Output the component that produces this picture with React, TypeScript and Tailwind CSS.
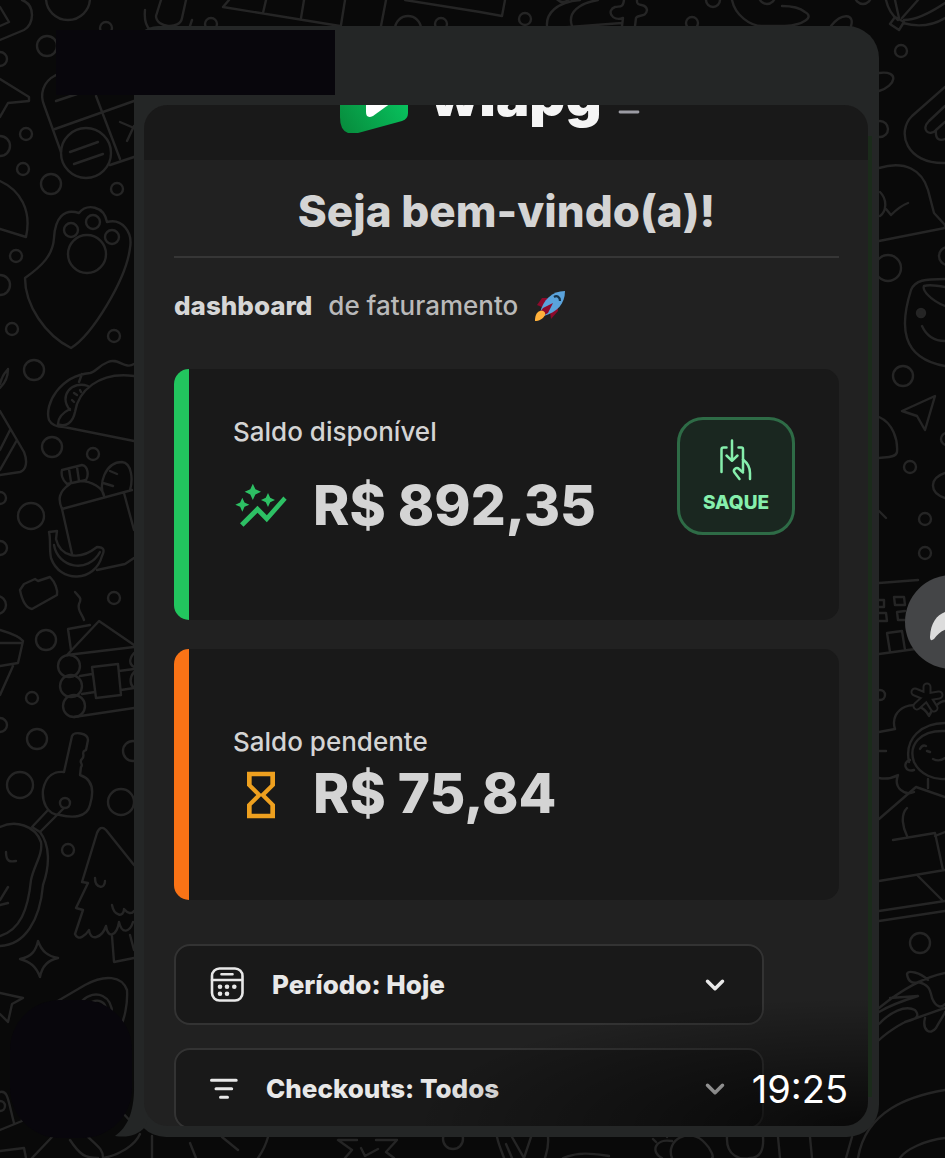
import type { ReactNode } from "react";
import { ChevronDown } from "lucide-react";
import { MdAutoGraph, MdHourglassEmpty } from "react-icons/md";

// [cx, cy, r]
const bubbles = [
  [68, -2, 22], [47, 46, 10], [0, 59, 7], [106, 28, 6], [211, 24, 6], [26, 134, 6], [0, 146, 10],
  [23, 169, 6], [51, 184, 10], [117, 189, 6], [16, 256, 6], [0, 285, 10], [12, 329, 6], [114, 336, 6],
  [34, 370, 10], [86, 153, 25], [87, 254, 19], [71, 230, 7], [93, 222, 7], [112, 237, 7],
  [408, 29, 13], [441, 24, 6], [525, 19, 6], [563, -6, 8], [713, 0, 7], [692, 23, 6], [767, -4, 8],
  [863, -4, 8], [901, 51, 6], [880, 129, 8], [888, 268, 13], [948, 256, 9], [903, 376, 10],
  [947, 439, 6], [910, 467, 6], [925, 519, 6], [925, 553, 6], [880, 695, 5], [920, 943, 10],
  [52, 447, 10], [93, 454, 6], [0, 498, 6], [31, 516, 13], [0, 548, 7], [114, 598, 6], [-3, 605, 9],
  [46, 640, 10], [32, 698, 6], [0, 725, 7], [37, 739, 10], [133, 751, 10], [69, 666, 11],
  [71, 686, 11], [74, 706, 11], [65, 803, 5], [20, 785, 13], [121, 802, 13], [68, 850, 6],
  [0, 1106, 5], [453, 1139, 10],
];

const doodles = [
  // top edge
  "M22 0C36 5 34 25 24 30L0 40M0 7L9 22L0 26M145 10C144 20 147 27 150 30",
  "M161 0L156 16C156 28 180 30 182 18L186 0M192 20L190 26M223 7L340 26M229 0L223 7M266 0L263 13M304 0L301 18M345 0L341 25M386 0L381 26M405 0L480 12L502 16L505 0",
  "M547 26C546 14 556 2 580 0M572 26C567 12 580 3 598 0M556 28L622 23M622 26L623 18C612 22 606 10 615 7C620 6 623 8 624 0M637 0C636 8 646 2 647 10C646 18 638 14 636 18L635 26",
  "M732 0C735 15 750 26 762 26L785 26C803 25 815 17 805 12C799 7 790 6 782 6M831 26C842 12 855 14 851 26",
  "M886 0C888 9 893 16 898 20M895 0L899 18M918 0L902 18M945 3C930 13 915 20 904 20M903 23C920 28 935 24 945 18M895 17L904 22L899 30L890 24Z",
  // left column
  "M56 75C42 82 40 95 44 105L61 152M55 129L134 101M96 96L120 159M110 165L134 157M70 152L98 142M74 164L103 154M56 101L77 94M120 122L134 128M127 141L134 126",
  "M0 79L29 97L29 101L8 103L0 117M0 181C20 190 32 210 26 237L0 229",
  "M25 278C42 266 53 255 54 238C55 218 64 208 79 213C87 203 104 206 107 222C122 218 133 232 130 248C126 280 92 335 71 348C45 335 25 305 25 278Z",
  "M0 384C3 372 8 370 8 369C8 378 4 384 0 388M0 411L24 452C28 462 26 470 20 472L0 475M10 430L0 450M17 440L0 470",
  "M134 364C125 370 118 357 108 362C98 366 96 372 90 373C60 376 44 404 49 420C52 426 58 427 64 427L134 441M134 376C98 371 78 392 75 412C73 422 66 428 58 424M88 386C72 380 58 396 70 410M82 374L79 382M58 424C58 416 64 412 70 409M74 393L77 395M80 390L81 392M72 400L74 402",
  "M62 470L82 465C88 466 89 475 86 480L67 484C62 480 61 474 62 470ZM69 469L71 482M77 467L79 481M70 484C58 492 58 500 62 509L72 554M80 481C92 481 103 488 104 496M62 509L132 490M104 496C98 485 105 462 122 462C132 463 133 480 130 490M124 493L134 530M97 570L125 564L134 558M110 471L117 474M103 483L113 486",
  "M49 532L57 531L56 539C60 556 78 562 97 547C104 547 105 550 102 556C95 582 60 584 51 558C49 548 51 540 49 532ZM54 545C58 568 88 574 100 552",
  "M20 590L24 584L35 579L38 581L50 577C55 582 58 590 57 595L32 609C26 608 22 600 20 590ZM75 592C80 598 82 598 79 604C77 610 82 614 84 620",
  "M67 655L99 621L134 645M67 655L134 647M71 650L68 629L90 625M92 667L118 664L121 695L96 698ZM80 676L92 674M82 694L95 692M74 717L134 708M119 671L134 669M121 690L134 688M134 653C128 660 130 665 134 667M134 672C129 678 130 685 134 688",
  "M0 630C10 633 20 637 23 641L18 663L0 666M0 643L22 643M13 666L0 695",
  "M64 772L72 736C74 731 88 733 88 740L86 750C80 752 86 756 82 759C78 762 84 764 81 767L80 775C95 780 93 795 90 805C87 818 72 818 60 815C46 815 42 800 43 790C46 775 55 771 64 772M48 810L32 827L40 832L64 808",
  "M0 827C15 820 35 825 41 842C43 855 34 865 31 880C28 910 20 930 0 936M40 832C50 845 50 865 43 885C40 920 25 945 0 946M6 852C6 862 10 862 16 861M0 900L8 887M0 905L8 903",
  "M134 865L106 830C102 826 99 828 97 833L82 882L88 883L76 908L83 910L75 934C78 942 86 935 89 930C90 942 102 938 106 926C108 940 117 935 119 922C122 935 130 932 133 922M95 878C95 888 105 890 105 881M112 905C114 916 124 918 124 909C128 914 132 914 134 911M112 936L114 962L134 958M130 935L134 950",
  "M38 941C42 952 48 956 58 958C48 960 42 966 40 977C36 966 30 962 20 959C32 957 36 950 38 941ZM0 993L23 998L12 1004L8 1022L0 1014",
  "M56 1002L85 985C105 974 122 976 127 990C128 1005 124 1020 120 1028M82 1001C95 988 114 995 112 1018M88 1004C98 997 107 1002 106 1012",
  "M0 1092C8 1090 8 1100 14 1123M22 1112L22 1121L0 1130M0 1151L24 1148L26 1158M120 1110L134 1125",
  // bottom edge
  "M32 1158L52 1137M70 1140C80 1155 85 1158 98 1158M88 1137C100 1148 103 1150 103 1158M103 1158C120 1155 135 1145 140 1134M152 1136L152 1158M190 1143L196 1158M222 1137L238 1150M268 1137C265 1148 260 1155 258 1158",
  "M345 1158L352 1150L338 1140L357 1140M376 1140L397 1140L386 1152L394 1158M361 1148L365 1156L378 1149M497 1137C499 1146 502 1152 504 1158M512 1137L524 1158M506 1144L512 1158M531 1137L524 1158M548 1137C549 1148 546 1154 545 1158M563 1158C580 1151 595 1154 609 1156",
  "M672 1158C665 1140 690 1126 705 1143C712 1150 714 1158 712 1158M672 1141C655 1138 650 1152 662 1158M656 1142L653 1139M667 1137L666 1133M727 1137C726 1156 740 1160 750 1158C760 1158 764 1150 763 1137M778 1137L780 1158M810 1137L812 1158M852 1137L846 1158M945 1138C925 1140 905 1150 900 1158M858 1158C866 1110 910 1096 945 1090",
  // right column
  "M879 73C900 70 896 86 879 91M945 87L912 116C896 132 906 164 945 163M945 106L929 121C920 130 930 137 936 130L945 122M936 130C935 140 940 141 945 139",
  "M879 168C905 160 922 170 928 190L934 213L945 225L945 228L879 241M880 192C888 200 886 212 880 216M886 209L891 215C896 210 900 206 908 203",
  "M945 279C925 279 915 280 911 290C900 325 900 358 945 366M945 306C930 300 922 290 924 286C930 284 940 286 945 287M922 326C927 337 936 341 945 341",
  "M902 411L935 396L925 430L917 416ZM879 417C893 423 898 440 897 452C896 458 885 457 879 458M945 473C930 478 928 492 945 498M879 511L886 518",
  "M879 583L918 580M879 654L930 647M879 600L884 600L884 607L879 607M894 597L904 597L905 605L895 605ZM879 613L886 613L887 621L879 621M905 611L897 612L898 620L906 620M887 633L902 631L905 650M887 633L890 652",
  "M879 732L895 729C888 708 918 695 929 716C932 708 940 701 945 701M879 778C890 780 896 776 898 775C893 788 905 796 914 792M945 723C922 723 904 738 909 762M945 731C920 730 908 745 914 762C920 775 935 780 945 779M910 760C902 762 905 773 914 770M920 749C922 745 924 745 926 746M927 751L930 752M933 759C937 761 941 761 945 758M879 751L886 751",
  "M879 819L916 787L945 797M928 779L928 788M907 808C900 815 903 828 907 836M893 840L935 833L943 870M935 836L945 832M879 881L945 870M918 876L942 900M879 911L945 901M879 921L945 911",
  "M945 973C920 978 895 995 879 1008M879 1012C892 1004 905 1000 918 996L890 998M879 1024C890 1012 905 1005 915 1010C922 1018 912 1020 905 1022C890 1030 876 1040 866 1055M928 980C920 972 908 970 907 974C908 982 913 984 918 982C930 985 930 990 932 998C936 1008 942 1008 945 1004M925 1018C922 1030 930 1036 936 1028C940 1020 945 1014 945 1012M905 1022L945 1008M866 1048C872 1058 876 1052 878 1040",
];

function Wallpaper() {
  return (
    <svg
      className="absolute inset-0 size-full"
      viewBox="0 0 945 1158"
      preserveAspectRatio="xMidYMin slice"
      fill="none"
      stroke="#252525"
      strokeWidth="2.4"
      strokeLinecap="round"
      strokeLinejoin="round"
      aria-hidden="true"
    >
      {bubbles.map(([cx, cy, r], i) => (
        <circle key={i} cx={cx} cy={cy} r={r} />
      ))}
      {doodles.map((d, i) => (
        <path key={i} d={d} />
      ))}
      <circle cx="921" cy="313" r="4" fill="#252525" />
      {/* asterisk outline */}
      <path d="M927 697V687M927 697L939 695M927 697L934 708M927 697L917 706M927 697L915 692" strokeWidth="9" />
      <path d="M927 697V687M927 697L939 695M927 697L934 708M927 697L917 706M927 697L915 692" stroke="#090909" strokeWidth="5" />
    </svg>
  );
}

function CalendarIcon() {
  return (
    <svg className="h-[35px] w-[34px] shrink-0" viewBox="0 0 34 35" fill="none" stroke="currentColor" strokeWidth="2.6" strokeLinecap="round">
      <rect x="2" y="1.5" width="30.5" height="32" rx="7.5" />
      <path d="M2 13H32M11.5 7.3H22.5" />
      <g fill="currentColor" stroke="none">
        <circle cx="10" cy="19.7" r="2.3" />
        <circle cx="17" cy="19.7" r="2.3" />
        <circle cx="24.3" cy="19.7" r="2.3" />
        <circle cx="10" cy="26.7" r="2.3" />
        <circle cx="17" cy="26.7" r="2.3" />
      </g>
    </svg>
  );
}

function FilterIcon() {
  return (
    <svg className="h-[22px] w-[28px] shrink-0" viewBox="0 0 28 22" fill="none" stroke="currentColor" strokeWidth="3" strokeLinecap="round">
      <path d="M1.5 2.2H26.2M6 10.8H21.7M10.5 19.2H17.5" />
    </svg>
  );
}

function WithdrawIcon() {
  return (
    <svg className="h-[42px] w-[34px]" viewBox="0 0 34 42" fill="none" stroke="currentColor" strokeWidth="2.5" strokeLinecap="round" strokeLinejoin="round">
      <path d="M2.5 33V10.5C2.5 9 3.2 8.500 4.500 8.500H7.500" />
      <path d="M19.500 8.500H22.500C23.500 8.500 24 9 24 10.500V32" />
      <path d="M13 1.500V21.500M7.500 16.500L13 21.800L18.500 16.500" />
      <path d="M24 20.500C28.500 24 31 29 31 34V40" />
      <path d="M20.500 40L15.500 33.500C13.500 30.500 17.500 27.500 20 30L24 33.500" />
    </svg>
  );
}

function BalanceCard({ className, label, amount, icon, gap, children }: {
  className: string;
  label: string;
  amount: string;
  icon: ReactNode;
  gap: string;
  children?: ReactNode;
}) {
  return (
    <section className={`flex min-h-[251px] items-start justify-between rounded-[15px] border-l-[15px] bg-[#191919] px-11 ${className}`}>
      <div>
        <h2 className="text-[26px] leading-[30px] font-medium">{label}</h2>
        <div className={`flex items-center gap-6 ${gap}`}>
          {icon}
          <p className="pb-1 text-[55px] leading-[56px] font-extrabold whitespace-nowrap">{amount}</p>
        </div>
      </div>
      {children}
    </section>
  );
}

function FilterSelect({ icon, label, option }: { icon: ReactNode; label: string; option: string }) {
  return (
    <div className="flex h-[81px] w-[590px] max-w-full items-center gap-7 rounded-2xl border-2 border-[#333] bg-[#191919] pr-8 pl-[34px] text-[#e8e8e8]">
      {icon}
      <select aria-label={label} className="min-w-0 flex-1 appearance-none bg-transparent text-[26px] leading-8 font-extrabold">
        <option>{option}</option>
      </select>
      <ChevronDown className="pointer-events-none size-[30px] shrink-0" strokeWidth={2.8} />
    </div>
  );
}

export default function App() {
  return (
    <main className="relative min-h-screen overflow-hidden bg-[#090909] pt-[26px] pr-[66px] pb-[21px] pl-[134px] font-['Inter',sans-serif] text-[#d4d4d4]">
      <Wallpaper />

      {/* message bubble */}
      <article className="relative rounded-[32px] rounded-tl-[24px] bg-[#242626] pt-[79px] pr-[11px] pb-[11px] pl-[10px]">
        <div className="absolute top-1 -left-[78px] h-[65px] w-[279px] bg-[#08060c]" />
        <div className="absolute -bottom-px -left-[124px] h-[138px] w-[122px] rounded-[50px] bg-[#08060c]" />
        <svg className="absolute -left-5 bottom-0 h-14 w-9" viewBox="0 0 36 56" fill="#242626" aria-hidden="true">
          <path d="M20 0C21 30 14 46 1 55C14 57 24 54 31 46L36 30V0Z" />
        </svg>
        <div className="absolute top-[110px] right-[7px] bottom-10 w-1 bg-[#1b2b1b]" />

        <div className="relative overflow-hidden rounded-[24px] bg-[#212121]">
          <header className="flex h-[55px] items-end justify-center overflow-hidden bg-[#191919] pr-8 pb-[27px]">
            <svg className="h-[74px] w-[68px] shrink-0" viewBox="0 0 68 74" aria-hidden="true">
              <defs>
                <linearGradient id="logo" x1="0" y1="1" x2="1" y2="0.3">
                  <stop offset="0" stopColor="#07893b" />
                  <stop offset="1" stopColor="#08cb63" />
                </linearGradient>
              </defs>
              <path d="M0 14Q0 0 14 3L60 14Q68 16 68 24V54Q68 60 62 62L18 74Q0 78 0 58Z" fill="url(#logo)" />
              <path d="M26 24Q26 17 32 21L51 34Q57 39 51 44L33 57Q26 60 26 53Z" fill="#fff" />
            </svg>
            <p className="ml-[22px] text-[56px] leading-[74px] font-black text-[#f5f5f5]">wiapg</p>
            <button type="button" aria-label="Menu" className="ml-4 h-[74px]">
              <svg className="h-[74px] w-[22px]" viewBox="0 0 22 74" stroke="#9b9ba3" strokeWidth="2.8" strokeLinecap="round">
                <path d="M2 33H20M2 43H20M2 53H20" />
              </svg>
            </button>
          </header>

          <div className="pr-[29px] pl-[30px]">
            <h1 className="border-b-2 border-[#363636] pt-6 pb-[18px] text-center text-[44px] leading-[54px] font-extrabold">
              Seja bem-vindo(a)!
            </h1>
            <p className="flex items-center pt-8 pb-[47px] text-[26px] leading-8 font-medium text-[#b9b9b9]">
              <strong className="mr-4 font-extrabold text-[#d6d6d6]">dashboard</strong>
              de faturamento
              <svg className="ml-4 size-8" viewBox="0 0 32 32" role="img" aria-label="Foguete">
                <path d="M3 15L8 8L14 8L10 18ZM16 21L24 17L24 21L17 29Z" fill="#8d0a2c" />
                <path d="M31 1C18 1 9 10 6 23L10 26C23 22 31 14 31 1Z" fill="#5aa3dc" />
                <path d="M9 18L19 13L14 23L5 28L4 25Z" fill="#8d0a2c" />
                <path d="M6 21C2 22 1 27 1 31C5 31 9 29 11 25C12 22 9 20 6 21Z" fill="#ffb13b" />
                <path d="M20 7C23 5 26 7 26 11" fill="none" stroke="#17344a" strokeWidth="2.2" />
              </svg>
            </p>

            <div className="flex flex-col gap-[29px]">
              <BalanceCard
                className="border-[#22c55e] pt-12"
                label="Saldo disponível"
                amount="R$ 892,35"
                gap="mt-[30px]"
                icon={<MdAutoGraph className="size-14 shrink-0 text-[#2dc064]" />}
              >
                <button
                  type="button"
                  className="flex size-[118px] shrink-0 flex-col items-center justify-center gap-3 rounded-[26px] border-[3px] border-[#2e6b46] bg-[#1a2720] text-[19px] leading-5 font-extrabold text-[#86efac]"
                >
                  <WithdrawIcon />
                  SAQUE
                </button>
              </BalanceCard>
              <BalanceCard
                className="border-[#f97316] pt-[78px]"
                label="Saldo pendente"
                amount="R$ 75,84"
                gap="mt-2"
                icon={<MdHourglassEmpty className="size-14 shrink-0 text-[#eea01f]" />}
              />
            </div>

            <div className="mt-11 -mb-[3px] flex flex-col gap-[23px]">
              <FilterSelect icon={<CalendarIcon />} label="Período" option="Período: Hoje" />
              <FilterSelect icon={<FilterIcon />} label="Checkouts" option="Checkouts: Todos" />
            </div>
          </div>

          <div className="pointer-events-none absolute right-0 bottom-0 h-[130px] w-[460px] bg-[radial-gradient(ellipse_at_bottom_right,rgba(0,0,0,0.75),rgba(0,0,0,0.35)_35%,transparent_70%)]" />
          <time className="absolute right-5 bottom-4 text-[38px] leading-[42px] text-white">19:25</time>
        </div>
      </article>

      <button
        type="button"
        aria-label="Encaminhar"
        className="absolute top-[575px] -right-[54px] size-[94px] rounded-full bg-[#444547] text-[#dcdcdc]"
      >
        <svg className="size-full" viewBox="0 0 94 94" fill="currentColor" aria-hidden="true">
          <path d="M25 62C26 43 36 36 49 35V27Q49 22 53 26L70 42Q72 45 70 48L53 63Q49 67 49 61V53C40 53 34 57 29 64Q25 67 25 62Z" />
        </svg>
      </button>
    </main>
  );
}
